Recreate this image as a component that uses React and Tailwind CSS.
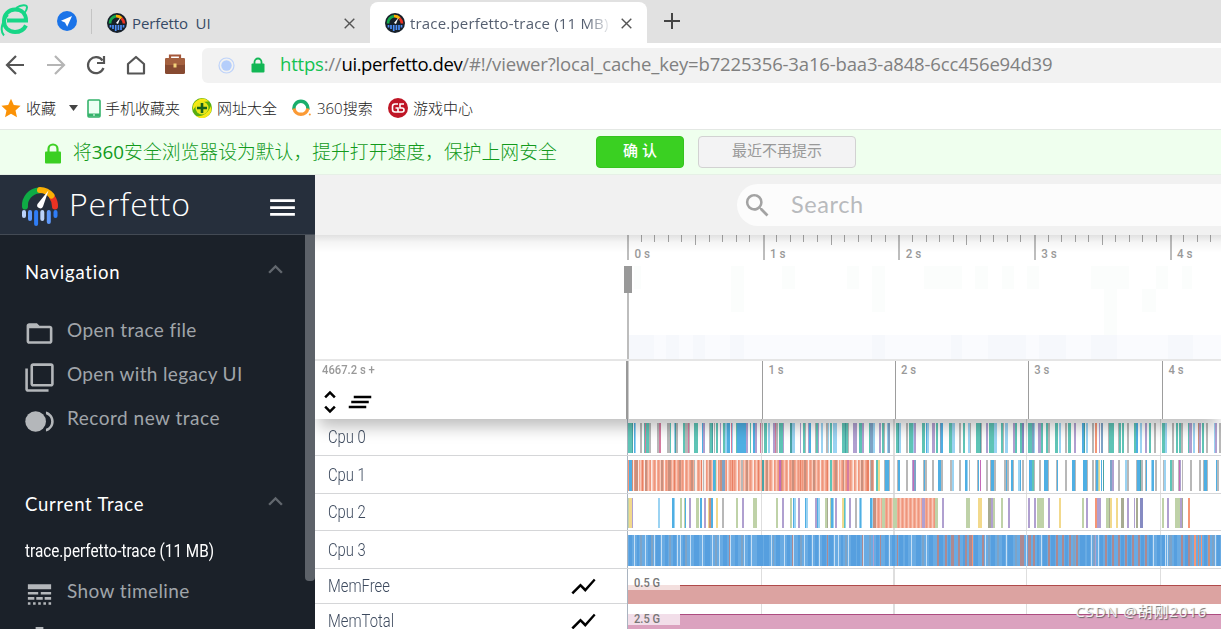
import React from 'react';
import {
  MdMenu,
  MdFolderOpen,
  MdFilterNone,
  MdFiberSmartRecord,
  MdExpandLess,
  MdLineStyle,
  MdFileDownload,
  MdShowChart,
  MdUnfoldMore,
  MdClearAll,
  MdSearch,
} from 'react-icons/md';

// Slice colours, keyed by the letter used in the track strings below
const COLORS = {
  t: '#5fc4b6',
  d: '#4aa3a5',
  b: '#4fafe3',
  l: '#9bd3f2',
  g: '#b8b8b8',
  v: '#b0a0d0',
  i: '#868bc2',
  p: '#d67b9f',
  m: '#c56ab8',
  o: '#f59576',
  r: '#e97f62',
  s: '#f5ae98',
  n: '#c9907e',
  y: '#f2d98c',
  e: '#bfd2a8',
  k: '#a7ab92',
  w: '#fbeae5',
  B: '#569fdf',
  L: '#c6dff5',
  G: '#7ea3c6',
  N: '#ad8990',
};

// "<x><colour><width>" per slice
const CPU0 =
  '628t4 632d1 634b1 635l1 640g2 644t1 645p1 646t3 649g2 657g2 659p2 667g3 670t1 674l1 675d1 676g2 683t2 685g3 688p1 689g1 694t4 702b1 703v2 709g1 710t2 712d1 714g1 716t2 720v1 723t2 725l2 727b3 731p1 732l1 736t1 737b9 746v2 750t1 753b2 755v2 760p1 762g1 764t3 768l2 773v2 775p1 776g2 779t4 783v1 790d2 792l3 800v1 803t2 805g1 808v1 809b2 815g1 816t2 818v1 ' +
  '821l2 826g2 828l1 830t2 833l4 842t3 845d1 846t2 848g1 853v2 855v2 859t3 862v2 869t1 870G3 873l2 879v2 882t2 884g1 887l1 888G2 896t2 898d1 899l2 906g2 909t3 912t1 913l1 914v2 922t3 926b1 927l2 932v3 936t2 940G1 941b2 949t3 952l3 959g2 963t2 968l2 970g1 976t4 980d1 981g1 986v2 989t5 994l3 1001t2 1003g1 1005l3 1013v2 1015t2 ' +
  '1020t2 1022i2 1028t4 1032G2 1034l1 1038v3 1041t2 1046t2 1048g2 1055t3 1059l2 1065g2 1068t3 1074v2 1082b2 1084d1 1086l2 1092g2 1095o2 1099v1 1101G2 1108g1 1109t5 1118g1 1119t2 1122t2 1127g2 1134t2 1136b2 1140l2 1145v2 1149t2 1154g2 1162t3 1165l2 1172g2 1176t2 1179t2 1181g2 1188t1 1189v3 1193l2 1198n1 1199v2 1202t2 1206g2 1214l1 1215v2 1219g2';

const CPU1 =
  '628o1 629b3 632n1 633w1 635n3 638w1 642r1 644w1 645n2 651w1 656w1 661n2 664w1 668n3 674r1 679n2 684w1 691n2 694g1 695w2 701r1 702w1 703g1 704w2 709n2 713b2 715t1 717w1 720n2 722G3 727w1 732r1 737w1 741g2 746n2 753w1 758r1 762d2 766n2 773w1 779m2 781n1 788w1 792n2 800r1 804n2 808w1 813n2 ' +
  '820w1 827r1 829w1 830t2 835n2 838w1 843n1 847p2 853w1 857w1 861n2 867r2 869w1 870g1 871n2 876t2 878y2 884g1 885b4 889g1 897g1 898b2 906g2 912v1 913m1 914G2 923g1 924b1 925g2 932g2 938b3 941g2 950g2 952l2 959g2 965b2 967l1 969g1 977g1 978b1 980m1 986g2 990g1 991b3 994g2 1004g2 1006b1 1007g2 1011b2 1013g1 1018l2 ' +
  '1020b1 1022g2 1029b3 1032t2 1034g1 1039g2 1044b4 1048g1 1056g1 1057b1 1065g2 1072b3 1075g1 1083b4 1087g1 1092g2 1095g1 1096b2 1098e1 1099y1 1101b1 1103d1 1110G2 1112v2 1118g2 1125l2 1127g2 1136g1 1137b3 1140d1 1141g2 1145g1 1146b1 1151l1 1152b2 1155g2 1163g1 1164l2 1170t2 1172g2 1178g1 1179m1 1180v1 1182g1 1190g2 1199g2 1203g1 1204b3 1207g1 1216b1 1217g2';

const CPU2 =
  '628e1 629y3 632v1 658l2 672b2 674l1 680e2 684e1 685b1 689v2 696e3 700b2 704v2 708y1 709n2 711b2 716y2 722g2 736e2 742v2 753e4 776e2 782v2 790e2 793b1 794l2 798v2 805b1 806l2 815v2 817b1 818l2 ' +
  '825e2 827k1 830e1 831b2 833l1 835v2 842y2 844t1 845l1 849v2 855g2 859l1 860b1 861l1 870b2 872l1 873n3 882e3 893e4 922v3 935e3 942v2 966e4 978y4 988k3 991v2 993e2 1001e2 1008v2 ' +
  '1028v2 1034v2 1037e7 1048v2 1059y2 1082e2 1086v2 1095o2 1097v4 1106e3 1109k1 1110y2 1116y2 1121k3 1127v2 1134v1 1136k2 1140i3 1162e2 1167v2 1175e5 1180v2 1182k1 1188o2';

const CPU3 =
  '629B3 634L1 637B2 640G2 645L1 648B3 651G2 654L1 656B4 661L1 665B3 669G2 673B3 677L1 680L1 683B2 685G2 690L1 694B5 702L1 705B5 712L1 715G2 719L1 723B4 729N1 730L1 735B3 741G2 744L1 748B2 751L1 757B6 764B5 771L1 773G1 776B4 784L1 787B3 792N1 793L1 798B2 800G2 804L1 808B3 812L1 815B3 819L1 ' +
  '822B4 827N1 829B4 834L1 838L1 841B2 845G2 848L1 851B5 857B3 862N1 863L1 869G2 873v1 876B3 880N1 885B3 889L1 892B3 897N1 899B4 905B3 911L1 916B5 922G2 926L1 929B4 937N2 939B4 945N2 948B2 951N3 958N2 963B2 965N2 969N3 972o1 974B4 982N2 985L1 988G2 991B4 997G2 1002B3 1006L1 1008B5 1015G2 ' +
  '1020N4 1026L1 1028N3 1033N2 1037B2 1041L1 1043B4 1048N2 1051B4 1056N2 1062N2 1065B3 1069N2 1073G2 1076N2 1080B5 1087B3 1091L1 1093G2 1095v1 1098L1 1100B3 1105N2 1108B3 1112N2 1118N2 1121B3 1125N2 1128B3 1132N2 1138N2 1141B3 1145N2 1149B3 1153L1 1157B3 1162B3 1165L1 1167L1 1169G3 1174B3 1181N2 1185B3 1188N2 1190G2 1194o2 1198n1 1201o1 1204B3 1208n2 1212G2 1215L1 1217B3';

const parseSlices = (data) =>
  data.trim().split(/\s+/).map((item) => {
    const [, x, c, w] = item.match(/^(\d+)([a-zA-Z])(\d+)$/);
    return { x: Number(x), w: Number(w), fill: COLORS[c] };
  });

const tracks = [
  { name: 'Cpu 0', height: 37, y: 4, h: 30, data: CPU0 },
  { name: 'Cpu 1', height: 38, y: 4, h: 31, data: CPU1, base: [[628, 246, 's']] },
  { name: 'Cpu 2', height: 37, y: 4, h: 30, data: CPU2, base: [[876, 59, 's']] },
  { name: 'Cpu 3', height: 38, y: 4, h: 31, data: CPU3, base: [[628, 593, 'c']] },
];

const GRID = [761, 893.5, 1026, 1160];

const Grid = ({ height }) => (
  <>
    {GRID.map((x) => (
      <rect key={x} x={x - 0.5} y={0} width={1.5} height={height} fill="#dedede" />
    ))}
    <rect x={627} y={0} width={1} height={height} fill="#a9b4c0" />
  </>
);

const CpuSlices = ({ track }) => (
  <svg width="594" height={track.height} viewBox={`627 0 594 ${track.height}`} shapeRendering="crispEdges" className="block shrink-0">
    <defs>
      <pattern id="warm" width="4" height="40" patternUnits="userSpaceOnUse">
        <rect width="4" height="40" fill="#f4a993" />
        <rect width="1" height="40" fill="#f9cbbc" />
        <rect x="2" width="1" height="40" fill="#ee967c" />
      </pattern>
    </defs>
    <Grid height={track.height} />
    {(track.base || []).map(([x, w, kind]) => (
      <rect key={x} x={x} y={track.y} width={w} height={track.h} fill={kind === 's' ? 'url(#warm)' : '#69abe3'} />
    ))}
    {parseSlices(track.data).map((s, i) => (
      <rect key={i} x={s.x} y={track.y} width={s.w} height={track.h} fill={s.fill} />
    ))}
    <rect x={627} y={track.height - 1} width={594} height={1} fill="#d5d6d8" />
  </svg>
);

const GaugeShape = () => (
  <>
    <path d="M25 206.500a15 15 0 0 1 14-16" fill="none" stroke="#0fab45" strokeWidth="6" strokeLinecap="round" />
    <path d="M55 206.500a15 15 0 0 0-3-9.500" fill="none" stroke="#ea3323" strokeWidth="6" strokeLinecap="round" />
    <path d="M40 190a16 16 0 0 1 11.500 5.500" fill="none" stroke="#fbb005" strokeWidth="6" strokeLinecap="round" />
    <path d="M48.500 190.500L43 206.500a3 3 0 0 1-5.500-2.500z" fill="#fff" />
    <g strokeWidth="4" strokeLinecap="round">
      <path d="M24 212v4M42.300 212v7" stroke="#bcd4fb" />
      <path d="M30 212v7M48.800 212v10" stroke="#5e99fb" />
      <path d="M36.100 212v12M55.500 212v4" stroke="#2f7df6" />
    </g>
  </>
);

const TabIcon = () => (
  <svg width="20" height="20" viewBox="0 0 20 20" className="shrink-0">
    <circle cx="10" cy="10" r="10" fill="#17202b" />
    <path d="M3 10.500a7 7 0 0 1 6-7.300" fill="none" stroke="#14a94b" strokeWidth="2.800" />
    <path d="M9 3.200a7 7 0 0 1 5.500 2" fill="none" stroke="#fbb005" strokeWidth="2.800" />
    <path d="M14.500 5.200a7 7 0 0 1 2.500 5.300" fill="none" stroke="#ea3323" strokeWidth="2.800" />
    <path d="M13.500 4.500L11 11l-2-1z" fill="#fff" />
    <path d="M3.500 12v2.500M6 12v4M8.700 12v6M11.400 12v5M14 12v5M16.500 12v2.500" stroke="#4d8ef7" strokeWidth="1.700" />
  </svg>
);

const Close = () => (
  <svg width="11" height="11" viewBox="0 0 11 11" className="shrink-0" fill="none" stroke="#555" strokeWidth="1.400">
    <path d="M.7.700l9.600 9.600M10.300.700L.7 10.300" />
  </svg>
);

const TabBar = () => (
  <div className="flex h-[43px] shrink-0 bg-[#e1e1e1]">
    <div className="flex h-[43px] w-[370px] shrink-0 items-center rounded-br-lg pt-[3px]">
      <svg width="29" height="34" viewBox="0 3 29 34" className="mb-1.5 shrink-0" fill="none" stroke="#17d687">
        <path d="M7 20.500h19C26 13 21 9.500 15 9.500 8.500 9.500 4 14.500 4 21c0 6.500 4.500 11 11 11 5 0 9-2.500 11-6.500" strokeWidth="4" />
        <path d="M4 35.500C-.5 31 2 21 8 15M16 8c5-3 11-4 11-.5 0 2-1 3.500-2.500 5.500" strokeWidth="2" />
      </svg>
      <svg width="20" height="20" viewBox="0 0 20 20" className="mb-1 ml-7 shrink-0">
        <circle cx="10" cy="10" r="10" fill="#1a73e8" />
        <path d="M15 5L4 9.700l4 1.900 2.200 4.200z" fill="#fff" />
      </svg>
      <div className="mb-1 ml-[14px] h-[25px] w-px shrink-0 bg-[#c4c4c4]" />
      <div className="ml-[15px] flex items-center">
        <TabIcon />
        <span className="ml-[5px] w-[212px] font-['Open_Sans'] text-[15px] tracking-[-0.1px] text-[#364a66]">Perfetto&nbsp; UI</span>
        <Close />
      </div>
    </div>
    <div className="mt-[2px] flex h-[41px] w-[277px] shrink-0 items-center rounded-t-lg bg-white pl-[15px] pt-px">
      <TabIcon />
      <span className="ml-[5px] w-[202px] whitespace-nowrap font-['Open_Sans'] text-[15px] tracking-[0.180px] text-[#555f70] [mask-image:linear-gradient(to_right,black_87%,transparent_100%)]">
        trace.perfetto-trace (11 MB)
      </span>
      <span className="ml-[9px]"><Close /></span>
    </div>
    <svg width="16" height="16" viewBox="0 0 16 16" className="ml-[17px] mt-[13px]" stroke="#444" strokeWidth="2">
      <path d="M8 0v16M0 8h16" />
    </svg>
  </div>
);

const AddressBar = () => (
  <div className="flex h-11 shrink-0 items-center bg-white">
    <svg width="190" height="30" viewBox="0 0 190 30" className="shrink-0" fill="none" strokeWidth="2.200">
      <path d="M24 15H7M16 6l-9 9 9 9" stroke="#555" />
      <path d="M47 15h17M55 6l9 9-9 9" stroke="#b5b5b5" />
      <path d="M102.500 10.500A8 8 0 1 0 103.500 18M104 6v7h-7" stroke="#555" />
      <path d="M128 14l8-7 8 7v9.500h-16z" stroke="#555" strokeLinejoin="round" />
      <path d="M170 8V5.500h10V8" stroke="#a5573a" />
      <rect x="165" y="8" width="20" height="16" rx="1.500" fill="#874a31" />
      <rect x="165" y="8" width="20" height="7" rx="1.500" fill="#a4603f" />
      <rect x="173.500" y="13.500" width="3" height="4" fill="#f3d27a" />
    </svg>
    <div className="ml-3 flex h-[35px] flex-1 items-center rounded-l-md bg-[#f2f2f2] pl-4">
      <svg width="17" height="17" viewBox="0 0 17 17" className="shrink-0">
        <circle cx="8.500" cy="8.500" r="7.500" fill="none" stroke="#bed3fa" strokeWidth="1.200" />
        <circle cx="8.500" cy="8.500" r="5.200" fill="#b5cefb" />
      </svg>
      <svg width="14" height="16" viewBox="0 0 14 16" className="ml-4 shrink-0">
        <path d="M3.500 7V5a3.500 3.500 0 0 1 7 0v2" fill="none" stroke="#12b755" strokeWidth="1.800" />
        <rect x=".5" y="6.500" width="13" height="9" rx="1" fill="#12b755" />
      </svg>
      <span className="ml-[15px] whitespace-nowrap pb-0.5 font-['Open_Sans'] text-[18.500px] tracking-[-0.210px] text-[#808080]">
        <span className="text-[#14c251]">https</span>://<span className="tracking-[-0.400px] text-black">ui.perfetto.dev</span><span className="tracking-[-0.160px]">/#!/viewer?local_cache_key=b7225356-3a16-baa3-a848-6cc456e94d39</span>
      </span>
    </div>
  </div>
);

const Bookmarks = () => (
  <div className="flex h-[43px] shrink-0 items-center border-b border-[#e4e8e4] bg-white font-['Open_Sans','Noto_Sans_CJK_SC',sans-serif] text-[15px] font-light text-[#222]">
    <svg width="20" height="20" viewBox="0 0 20 20" className="ml-px shrink-0">
      <path d="M10 0.800l2.800 6.300 6.800.7-5.100 4.600 1.500 6.800L10 15.700l-6 3.500 1.500-6.800L.4 7.800l6.800-.7z" fill="#fb9206" />
    </svg>
    <span className="ml-[5px] w-[30px] whitespace-nowrap">收藏</span>
    <svg width="9" height="6" viewBox="0 0 9 6" className="ml-[13px] shrink-0"><path d="M0 0h9L4.500 6z" fill="#444" /></svg>
    <svg width="14" height="19" viewBox="0 0 14 19" className="ml-[9px] shrink-0">
      <rect x="1" y="1" width="12" height="17" rx="1" fill="#edfff3" stroke="#35b36b" strokeWidth="1.600" />
      <path d="M1 14.500h12v3H1z" fill="#35b36b" /><path d="M6 16h2" stroke="#fff" />
    </svg>
    <span className="ml-1 w-[75px] whitespace-nowrap">手机收藏夹</span>
    <svg width="20" height="20" viewBox="0 0 20 20" className="ml-3 shrink-0">
      <circle cx="10" cy="10" r="10" fill="#58ad10" />
      <path d="M1 12A9.500 9.500 0 0 1 17 3.500C10 3 5 6 1 12zM19 8a9.500 9.500 0 0 1-15 10C11 19 16 15 19 8z" fill="#f8e814" />
      <circle cx="10" cy="10" r="6.500" fill="#e9e61a" />
      <path d="M10 5v10M5 10h10" stroke="#17601c" strokeWidth="2.600" />
    </svg>
    <span className="ml-[5px] w-[60px] whitespace-nowrap">网址大全</span>
    <svg width="20" height="20" viewBox="0 0 20 20" className="ml-[15px] shrink-0" fill="none" strokeWidth="3.400">
      <path d="M2 11.500A7 7 0 1 1 15.800 11.500" stroke="#18ae6b" />
      <path d="M2 10.500a7 7 0 0 0 13.800 0" stroke="#fb9a35" />
      <circle cx="17.800" cy="16.500" r="1" fill="#fb9a35" stroke="none" />
    </svg>
    <span className="ml-[5px] w-[57px] whitespace-nowrap">360搜索</span>
    <svg width="20" height="20" viewBox="0 0 20 20" className="ml-[14px] shrink-0" fill="none">
      <circle cx="10" cy="10" r="10" fill="#bf1626" />
      <path d="M10 6H7a2.500 2.500 0 0 0-2.500 2.500v3A2.500 2.500 0 0 0 7 14h3v-4H7.500M16 6h-4v4h2a2 2 0 0 1 0 4h-4" stroke="#fff" strokeWidth="1.600" />
    </svg>
    <span className="ml-[5px] whitespace-nowrap">游戏中心</span>
  </div>
);

const Notice = () => (
  <div className="flex h-[45px] shrink-0 items-center border-b border-[#e6f0e6] bg-[#efffee] pl-[45px] font-['Open_Sans','Noto_Sans_CJK_SC',sans-serif]">
    <svg width="16" height="21" viewBox="0 0 16 21" className="mt-[3px] shrink-0">
      <path d="M3.500 9V6a4.500 4.500 0 0 1 9 0v3" fill="none" stroke="#3fd125" strokeWidth="2.200" />
      <rect y="8.500" width="16" height="12" rx="1" fill="#3bcf22" />
    </svg>
    <span className="ml-3 w-[523px] whitespace-nowrap text-[18.820px] font-light text-[#129a1c]">将<span className="font-normal">360</span>安全浏览器设为默认，提升打开速度，保护上网安全</span>
    <button className="mb-px h-8 w-[88px] shrink-0 rounded-sm border border-[#35c41e] bg-[#3ad022] pb-0.5 text-[15px] font-medium text-white">确 认</button>
    <button className="mb-px ml-[14px] h-8 w-[158px] shrink-0 rounded-sm border border-[#d2d2d2] bg-[#f3f3f4] pb-0.5 text-[15px] text-[#999]">最近不再提示</button>
  </div>
);

const navItems = [
  { icon: MdFolderOpen, label: 'Open trace file', tracking: 'tracking-[0.400px]' },
  { icon: MdFilterNone, label: 'Open with legacy UI', tracking: 'tracking-[0.350px]' },
  { icon: MdFiberSmartRecord, label: 'Record new trace', tracking: 'tracking-[0.500px]' },
];

const SideItem = ({ item }) => {
  const Icon = item.icon;
  return (
    <div className="flex h-11 shrink-0 items-center pl-6">
      <Icon size={31} className="mt-1 shrink-0 text-[#b4b7ba]" />
      {item.label && (
        <span className={`ml-3 whitespace-nowrap pb-0.5 text-[19px] leading-6 text-[#a0a5aa] ${item.tracking}`}>{item.label}</span>
      )}
    </div>
  );
};

const Sidebar = () => (
  <aside className="flex w-[315px] shrink-0 flex-col overflow-hidden bg-[#1b2129] font-['Lato']">
    <div className="flex h-[60px] shrink-0 items-center border-b border-[#434a54] bg-[#262f3c] pl-[21px]">
      <svg width="38" height="41" viewBox="21 186 38 41" className="mt-1 shrink-0"><GaugeShape /></svg>
      <span className="ml-[10px] w-[197px] pb-0.5 font-['Open_Sans'] text-[32px] font-light tracking-[0.700px] text-white">Perfetto</span>
      <MdMenu size={33} className="mt-[5px] shrink-0 text-white" />
    </div>
    <div className="flex min-h-0 flex-1">
      <div className="w-[305px] shrink-0 overflow-hidden">
        <div className="flex h-[74px] items-center justify-between pb-px pl-[25px] pr-[15px]">
          <h2 className="text-[18.500px] leading-6 tracking-[0.800px] text-white">Navigation</h2>
          <MdExpandLess size={29} className="mb-1 text-[#62676e]" />
        </div>
        {navItems.map((item) => <SideItem key={item.label} item={item} />)}
        <div className="mt-[26px] flex h-[74px] items-center justify-between pb-px pl-[25px] pr-[15px]">
          <h2 className="text-[18.500px] leading-6 tracking-[0.750px] text-white">Current Trace</h2>
          <MdExpandLess size={29} className="mb-1 text-[#62676e]" />
        </div>
        <div className="flex h-[29px] items-center pb-2.5 pl-[25px]">
          <span className="origin-left scale-x-[0.85] whitespace-nowrap font-['Roboto'] text-[18px] leading-6 text-white">trace.perfetto-trace (11 MB)</span>
        </div>
        <SideItem item={{ icon: MdLineStyle, label: 'Show timeline', tracking: 'tracking-[0.400px]' }} />
        <SideItem item={{ icon: MdFileDownload }} />
      </div>
      <div className="w-[10px] shrink-0"><div className="h-[346px] rounded-b-sm bg-[#5d6269]" /></div>
    </div>
  </aside>
);

const OVERVIEW_CELLS = [
  [634, 7, 0, 23], [731, 13, 0, 46], [782, 13, 0, 23], [847, 12, 0, 23], [872, 13, 0, 46], [924, 38, 0, 23],
  [975, 13, 0, 23], [1002, 12, 0, 23], [1027, 12, 0, 23], [1091, 38, 0, 23], [1104, 13, 23, 46],
  [1142, 14, 23, 23], [1156, 12, 0, 23], [1182, 10, 0, 23],
];
const OVERVIEW_BUSY = [[628, 26], [666, 13], [693, 12], [730, 14], [872, 13], [951, 11], [988, 38], [1039, 27], [1091, 26], [1168, 25]];

const Overview = () => (
  <div className="flex h-[126px] shrink-0 border-b-2 border-[#e6e6e6] bg-white">
    <svg width="906" height="124" viewBox="315 235 906 124" shapeRendering="crispEdges" className="block">
      <defs>
        <linearGradient id="topShade" x1="0" x2="0" y1="0" y2="1">
          <stop offset="0" stopColor="#000" stopOpacity=".12" />
          <stop offset=".4" stopColor="#000" stopOpacity=".04" />
          <stop offset="1" stopColor="#000" stopOpacity="0" />
        </linearGradient>
      </defs>
      {OVERVIEW_CELLS.map(([x, w, y, h]) => <rect key={x} x={x} y={266 + y} width={w} height={h} fill="#fbfdfc" />)}
      <rect x="628" y="335" width="593" height="24" fill="#fafbfe" />
      {OVERVIEW_BUSY.map(([x, w]) => <rect key={x} x={x} y="335" width={w} height="24" fill="#f6f8fc" />)}
      {Array.from({ length: 44 }, (_, i) => {
        const h = i % 10 === 0 ? 25 : i % 5 === 0 ? 10 : 7;
        return <rect key={i} x={Math.round(627.2 + i * 13.56)} y="235" width={i % 10 === 0 ? 2 : 1} height={h} fill={i % 10 === 0 ? '#bdbdbd' : '#a8a8a8'} />;
      })}
      <rect x="627" y="266" width="2" height="93" fill="#bdbdbd" />
      <rect x="624" y="266" width="8" height="27" fill="#999" />
      <rect x="315" y="235" width="906" height="18" fill="url(#topShade)" />
      <g fontFamily="Roboto" fontSize="12.500" fontWeight="500" fill="#999">
        {[0, 1, 2, 3, 4].map((s) => (
          <text key={s} x={634.5 + s * 135.6} y="258" textLength="15.500" lengthAdjust="spacingAndGlyphs">{s} s</text>
        ))}
      </g>
    </svg>
  </div>
);

const AXIS = [[762, 1], [894.6, 2], [1027.8, 3], [1162, 4]];

const TimeAxis = () => (
  <div className="relative z-10 flex h-[58px] shrink-0 bg-white shadow-[0_12px_16px_-4px_rgba(0,0,0,0.26)]">
    <div className="flex w-[312px] shrink-0 flex-col pl-[7px] pt-px">
      <span className="h-[16px] origin-left scale-x-[0.9] whitespace-nowrap font-['Roboto'] text-[12.500px] font-medium leading-4 text-[#999]">4667.2 s +</span>
      <div className="mt-[9px] flex items-center">
        <MdUnfoldMore size={30} className="-ml-[7px] text-black" />
        <MdClearAll size={30} className="text-black" />
      </div>
    </div>
    <svg width="594" height="58" viewBox="627 361 594 58" shapeRendering="crispEdges" className="block overflow-visible">
      <rect x="626" y="361" width="2" height="58" fill="#999" />
      <rect x="628" y="361" width="1" height="58" fill="#ccc" />
      {AXIS.map(([x]) => <rect key={x} x={Math.round(x)} y="361" width="1" height="58" fill="#9d9d9d" />)}
      <g fontFamily="Roboto" fontSize="12.500" fontWeight="500" fill="#999">
        {AXIS.map(([x, s]) => (
          <text key={s} x={x + 6.5} y="374" textLength="15" lengthAdjust="spacingAndGlyphs">{s} s</text>
        ))}
      </g>
    </svg>
  </div>
);

const TrackName = ({ children }) => (
  <span className="origin-left scale-x-[0.8] whitespace-nowrap font-['Roboto'] text-[18.500px] font-light leading-6 text-[#3d4a5e]">{children}</span>
);

const CounterRow = ({ name, value, height, top, band, fill, line }) => (
  <div className="flex shrink-0" style={{ height }}>
    <div className="flex w-[312px] shrink-0 items-center justify-between border-b border-[#d5d6d8] pl-[13px] pr-[29px]">
      <TrackName>{name}</TrackName>
      <MdShowChart size={29} className="text-black" />
    </div>
    <svg width="594" height={height} viewBox={`627 0 594 ${height}`} shapeRendering="crispEdges" className="block shrink-0">
      <Grid height={height} />
      <rect x="628" y={top} width="593" height={band} fill={fill} />
      <rect x="680" y={top} width="541" height="1" fill={line} />
      <rect x="628" y={top + band - 1} width="593" height="1" fill={line} opacity=".6" />
      <rect x="628" y={top > 12 ? top - 7 : top} width="52" height={top > 12 ? 12 : 11} fill="#fff" opacity=".65" />
      <text x="634" y={height - (top > 12 ? 17 : 16)} fontFamily="Roboto" fontSize="13.500" fontWeight="500" fill="#777" textLength="26" lengthAdjust="spacingAndGlyphs">
        {value}
      </text>
    </svg>
  </div>
);

const Viewer = () => (
  <main className="flex min-w-0 flex-1 flex-col overflow-hidden bg-white">
    <div className="flex h-[60px] shrink-0 items-center bg-[#f1f1f1]">
      <div className="ml-[422px] flex h-[42px] flex-1 items-center rounded-l-full bg-[#fcfcfc] pl-[5px]">
        <MdSearch size={31} className="text-[#a3a3a3]" />
        <span className="ml-[18px] font-['Lato'] text-[23.500px] tracking-[0.600px] text-[#b8babd]">Search</span>
      </div>
    </div>
    <Overview />
    <TimeAxis />
    {tracks.map((track) => (
      <div key={track.name} className="flex shrink-0">
        <div className="flex w-[312px] shrink-0 items-center border-b border-[#d5d6d8] pl-[13px]">
          <TrackName>{track.name}</TrackName>
        </div>
        <CpuSlices track={track} />
      </div>
    ))}
    <CounterRow name="MemFree" value="0.5 G" height={35} top={16} band={20} fill="#dca3a1" line="#b04a4a" />
    <CounterRow name="MemTotal" value="2.5 G" height={35} top={10} band={26} fill="#dba2bf" line="#ad4c80" />
  </main>
);

const App = () => (
  <div className="relative flex h-[629px] w-[1221px] flex-col overflow-hidden">
    <TabBar />
    <AddressBar />
    <Bookmarks />
    <Notice />
    <div className="flex min-h-0 flex-1">
      <Sidebar />
      <Viewer />
    </div>
    <span className="absolute bottom-2 right-[14px] z-20 whitespace-nowrap font-['Open_Sans','Noto_Sans_CJK_SC',sans-serif] text-[15px] leading-5 tracking-[0.850px] text-white/85 [text-shadow:1px_1px_1px_#666]">
      CSDN @胡刚2016
    </span>
  </div>
);

export default App;
